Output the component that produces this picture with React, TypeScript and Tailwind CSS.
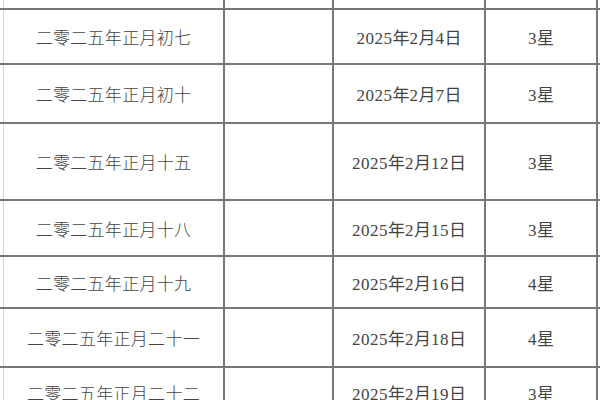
import React from "react";

type Row = { h: string; lunar: string; date: string; star: string };

const rows: Row[] = [
  { h: "h-[10px]", lunar: "", date: "", star: "" },
  { h: "h-[55px]", lunar: "二零二五年正月初七", date: "2025年2月4日", star: "3星" },
  { h: "h-[59px]", lunar: "二零二五年正月初十", date: "2025年2月7日", star: "3星" },
  { h: "h-[77px]", lunar: "二零二五年正月十五", date: "2025年2月12日", star: "3星" },
  { h: "h-[56px]", lunar: "二零二五年正月十八", date: "2025年2月15日", star: "3星" },
  { h: "h-[52px]", lunar: "二零二五年正月十九", date: "2025年2月16日", star: "4星" },
  { h: "h-[59px]", lunar: "二零二五年正月二十一", date: "2025年2月18日", star: "4星" },
  { h: "h-[50px]", lunar: "二零二五年正月二十二", date: "2025年2月19日", star: "3星" },
];

// digits in the scan sit a little wider apart than plain Times
function Spaced({ text }: { text: string }) {
  const parts = text.split(/(\d+)/);
  return (
    <>
      {parts.map((p, i) =>
        /^\d+$/.test(p) ? (
          <span key={i} className="tracking-[0.5px]">
            {p}
          </span>
        ) : (
          <span key={i}>{p}</span>
        )
      )}
    </>
  );
}

export default function App() {
  return (
    <div
      className="w-[600px] h-[400px] overflow-hidden bg-white text-[#444] text-[17px]"
      style={{ fontFamily: '"Liberation Serif", "Noto Sans CJK SC", serif' }}
    >
      {rows.map((r, i) => (
        <div key={i} className={`flex border-b-2 border-[#777] ${r.h}`}>
          <div className="ml-[3px] w-[222px] flex items-center justify-center pt-[5px] border-l border-l-[#d4d4d4] border-r-2 border-r-[#777] font-light tracking-[0.3px]">
            {r.lunar}
          </div>
          <div className="w-[109px] border-r-2 border-[#777]" />
          <div className="w-[152px] flex items-center justify-center pt-[5px] border-r-2 border-[#777]">
            <Spaced text={r.date} />
          </div>
          <div className="w-[112px] flex items-center justify-center pt-[5px] border-r-2 border-[#777]">
            <Spaced text={r.star} />
          </div>
        </div>
      ))}
    </div>
  );
}
